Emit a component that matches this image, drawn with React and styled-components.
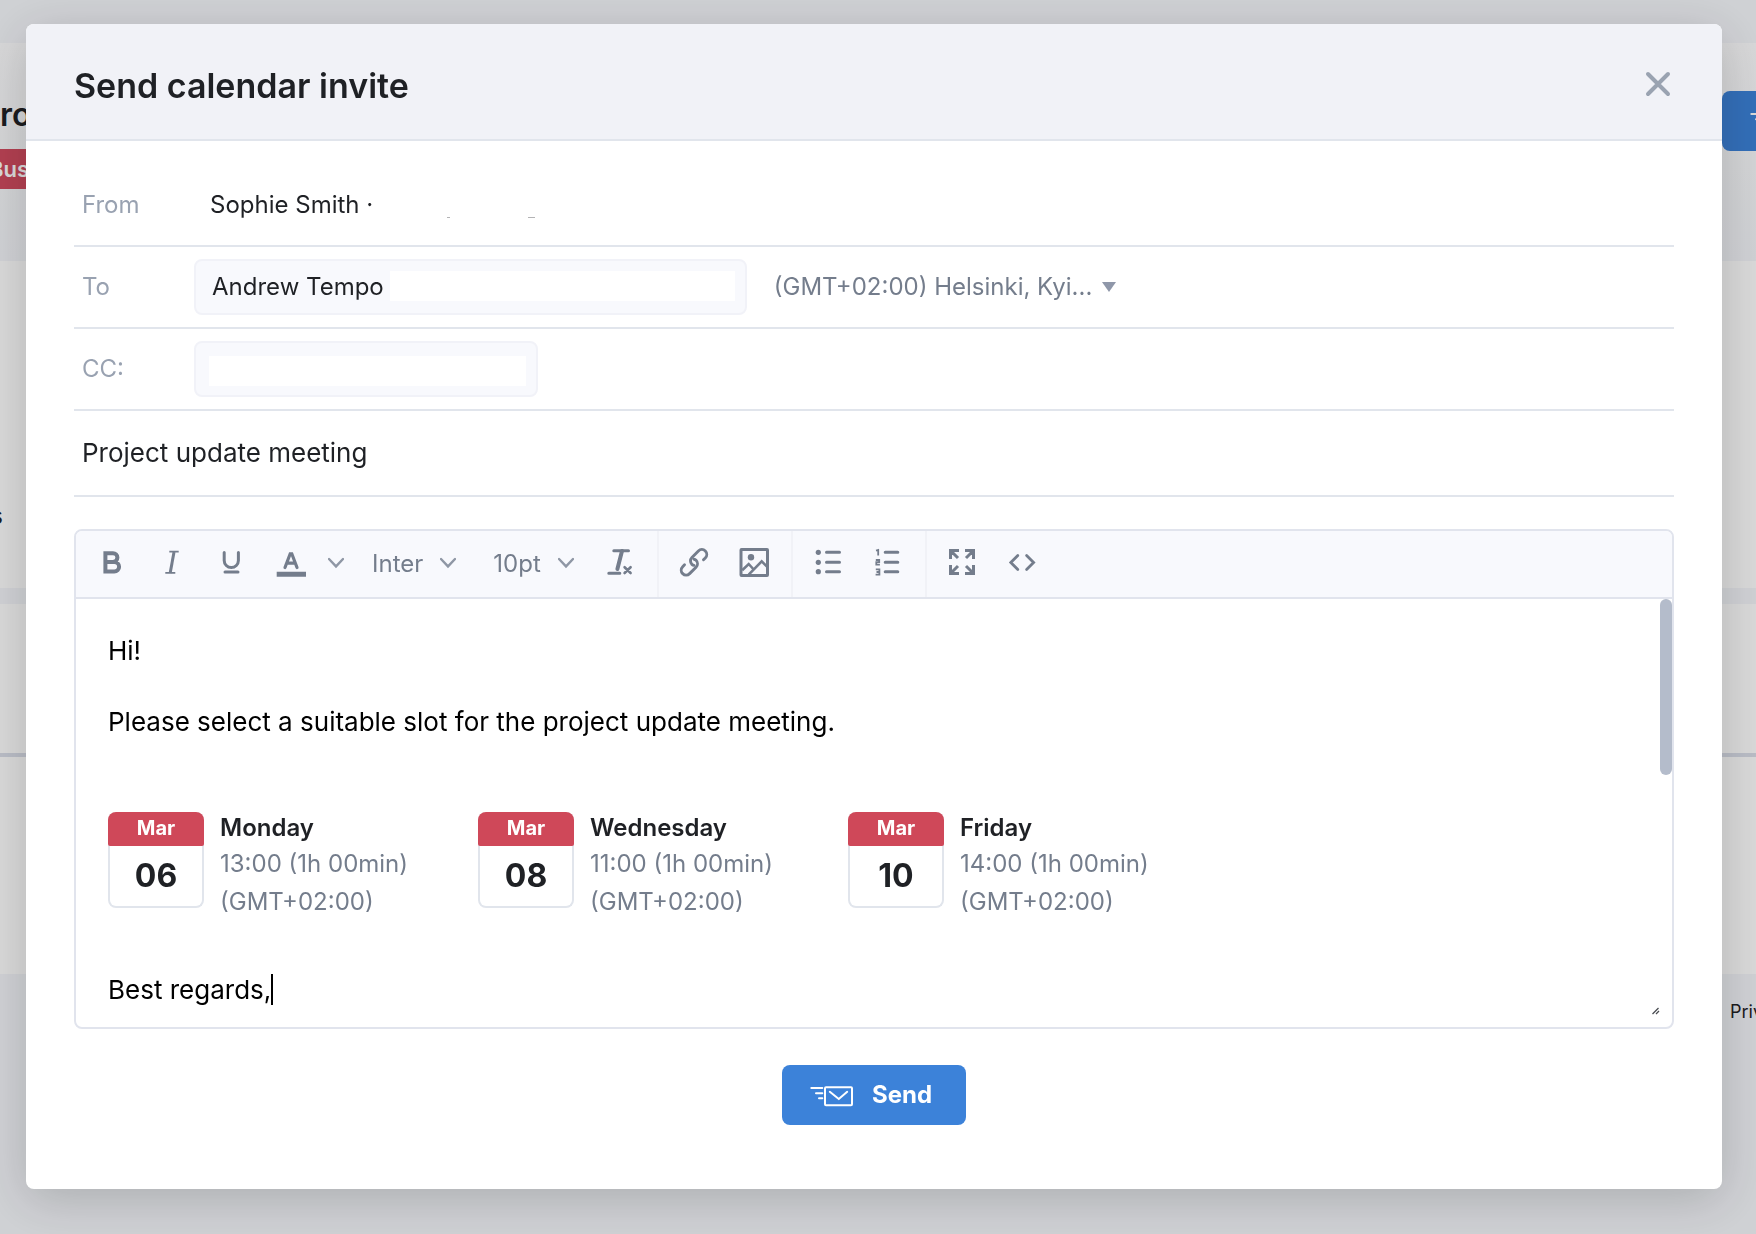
import React, { useState } from "react";
import styled, { createGlobalStyle } from "styled-components";

const GlobalStyle = createGlobalStyle`
  * {
    box-sizing: border-box;
  }
  body {
    margin: 0;
    font-family: Inter, "Liberation Sans", sans-serif;
    font-size: 24px;
    color: #1f2125;
    overflow: hidden;
  }
  button, input, select {
    font: inherit;
    color: inherit;
    border: none;
    background: transparent;
    padding: 0;
    margin: 0;
    outline: none;
  }
`;

/* page behind the dialog */

const Page = styled.div`
  min-height: 100vh;
  background-color: #f4f6fa;
  overflow: hidden;
`;

const TopBar = styled.div`
  height: 43px;
`;

const Hero = styled.div`
  display: flex;
  justify-content: space-between;
  align-items: flex-start;
  height: 218px;
  padding-top: 48px;
  background: linear-gradient(#fdfdfe, #f4f6fa);
`;

const PageTitle = styled.h1`
  margin: 0;
  font-size: 32px;
  line-height: 48px;
  font-weight: 600;
`;

const Badge = styled.div`
  display: flex;
  justify-content: flex-end;
  width: 29px;
  height: 40px;
  margin-top: 10px;
  line-height: 40px;
  font-size: 22px;
  font-weight: 600;
  color: #fff;
  background-color: #d14b5f;
`;

const Card = styled.div`
  display: flex;
  align-items: center;
  height: ${(props) => props.$height}px;
  margin-bottom: ${(props) => props.$gap || 0}px;
  background-color: #fff;
  border-bottom: ${(props) => (props.$line ? "4px solid #dadee9" : "none")};
`;

const CardText = styled.span`
  display: flex;
  justify-content: flex-end;
  width: 3px;
  padding-top: 182px;
`;

const Footer = styled.footer`
  display: flex;
  justify-content: flex-end;
  padding-top: 24px;
`;

const FooterLink = styled.a`
  width: 26px;
  font-size: 18px;
  line-height: 28px;
  color: inherit;
  text-decoration: none;
`;

/* dialog */

const Overlay = styled.div`
  position: fixed;
  inset: 0;
  padding: 24px 34px 0 26px;
  background-color: rgba(0, 0, 0, 0.15);
`;

const Modal = styled.div`
  background-color: #fff;
  border-radius: 8px;
  overflow: hidden;
  box-shadow: 0 10px 50px rgba(0, 0, 0, 0.18);
`;

const Header = styled.header`
  display: flex;
  justify-content: space-between;
  align-items: center;
  height: 117px;
  padding: 8px 48px 0;
  background-color: #f1f2f7;
  border-bottom: 2px solid #e1e5ec;
`;

const Title = styled.h2`
  margin: 0;
  font-size: 34px;
  line-height: 48px;
  font-weight: 600;
`;

const CloseButton = styled.button`
  display: flex;
  color: #9aa3b1;
`;

const Content = styled.div`
  padding: 24px 48px 64px;
`;

const Row = styled.div`
  display: flex;
  align-items: center;
  height: ${(props) => props.$height || 82}px;
  padding-left: 8px;
  border-bottom: 2px solid #e1e5ec;
`;

const Label = styled.label`
  width: 112px;
  padding-bottom: 2px;
  color: #99a2b1;
`;

const Sender = styled.div`
  display: flex;
  align-items: center;
  gap: 72px;
  padding: 0 0 2px 16px;
`;

const Chip = styled.div`
  display: flex;
  align-items: center;
  height: 56px;
  padding: ${(props) => (props.$empty ? "4px 10px 0 13px" : "0 10px 2px 16px")};
  gap: 6px;
  background-color: #f8f9fd;
  border: 2px solid #f1f2f8;
  border-radius: 8px;
`;

const ChipInput = styled.input`
  width: ${(props) => props.$width}px;
  height: 30px;
  background-color: #fff;
`;

const ZoneLabel = styled.label`
  display: flex;
  align-items: center;
  gap: 10px;
  margin-left: 27px;
  color: #747d8c;
`;

const Select = styled.select`
  appearance: none;
  field-sizing: content;
  padding-bottom: 2px;
`;

const Subject = styled.input`
  width: 100%;
  padding-bottom: 2px;
  font-size: 26px;
`;

const Editor = styled.div`
  margin-top: 32px;
  border: 2px solid #e1e4ed;
  border-radius: 8px;
  overflow: hidden;
`;

const Toolbar = styled.div`
  display: flex;
  height: 68px;
  background-color: #f8f9fd;
  border-bottom: 2px solid #e1e4ed;
  color: #747d8c;
`;

const Group = styled.div`
  display: flex;
  align-items: center;
  padding: 0 7px 0 5px;
  border-right: 2px solid #f1f2f7;

  &:last-child {
    border-right: none;
  }
`;

const ToolButton = styled.button`
  display: flex;
  align-items: center;
  justify-content: center;
  width: ${(props) => (props.$narrow ? 30 : 60)}px;
  height: 66px;
`;

const ToolSelect = styled.label`
  display: flex;
  align-items: center;
  gap: 17px;
  padding: 0 16px 0 21px;
`;

const EditorBody = styled.div`
  position: relative;
  padding: 34px 32px 19px;
  font-size: 26px;
  line-height: 36px;
  color: #000;
  outline: none;
`;

const Paragraph = styled.p`
  margin: 0 0 35px;

  &:last-of-type {
    margin: 0;
  }
`;

const Caret = styled.span`
  display: inline-block;
  width: 2px;
  height: 31px;
  margin-top: -8px;
  vertical-align: -6px;
  background-color: #000;
`;

const ScrollThumb = styled.div`
  position: absolute;
  top: 0;
  right: 0;
  width: 12px;
  height: 176px;
  border-radius: 6px;
  background-color: #b4bccb;
`;

const ResizeHandle = styled.svg`
  position: absolute;
  right: 12px;
  bottom: 12px;
`;

const Slots = styled.div`
  display: flex;
  margin: 72px 0 51px;
`;

const Slot = styled.div`
  display: flex;
  gap: 16px;
  width: 370px;
`;

const DateBox = styled.div`
  width: 96px;
  height: 96px;
  border: 2px solid #e1e5ec;
  border-top: none;
  border-radius: 8px;
  text-align: center;
`;

const Month = styled.div`
  height: 34px;
  margin: 0 -2px;
  border-radius: 8px 8px 2px 2px;
  background-color: #cf4859;
  color: #fff;
  font-size: 20px;
  line-height: 32px;
  font-weight: 700;
`;

const DayNumber = styled.div`
  font-size: 32px;
  line-height: 60px;
  font-weight: 700;
  color: #1f2125;
`;

const SlotText = styled.div`
  font-size: 24px;
  line-height: 38px;
  color: #747d8c;
`;

const DayName = styled.div`
  margin-bottom: 1px;
  line-height: 32px;
  font-weight: 600;
  color: #1f2125;
`;

const Actions = styled.div`
  display: flex;
  justify-content: center;
  margin-top: 36px;
`;

const SendButton = styled.button`
  display: flex;
  align-items: center;
  gap: 18px;
  flex-shrink: 0;
  height: 60px;
  padding: 0 34px 0 28px;
  border-radius: 8px;
  background-color: #3c82d9;
  color: #fff;
  font-weight: 700;
`;

const SendText = styled.span`
  padding-bottom: 2px;
`;

/* runs off the right side of the page */
const PageSendButton = styled(SendButton)`
  && {
    margin-right: -72px;
  }
`;

/* icons */

const Icon = ({ children, width = 3 }) => (
  <svg
    width="36"
    height="36"
    viewBox="0 0 36 36"
    fill="none"
    stroke="currentColor"
    strokeWidth={width}
    strokeLinecap="round"
    aria-hidden="true"
  >
    {children}
  </svg>
);

const BoldIcon = () => (
  <Icon width={4}>
    <path d="M12.4 7.2H20a4.4 4.4 0 0 1 0 8.8h-7.6zM12.4 16h8.9a4.8 4.8 0 0 1 0 9.6h-8.9z" />
  </Icon>
);

const ItalicIcon = () => (
  <Icon>
    <path d="M21 6l-3.8 21" strokeLinecap="butt" />
    <path d="M16.3 5.6h9.4M12.3 26.8h10" strokeWidth="1.8" strokeLinecap="butt" />
  </Icon>
);

const UnderlineIcon = () => (
  <Icon>
    <path d="M11.2 6.5v8a7.1 7.1 0 0 0 14.2 0v-8M12 26h13" />
  </Icon>
);

const ColorIcon = () => (
  <Icon width={3.2}>
    <path d="M12 21.5L17.2 7.8h1.6L24 21.5M14 17.2h8" />
    <path d="M3.7 28.3h29.3" strokeWidth="5" strokeLinecap="butt" />
  </Icon>
);

const ClearIcon = () => (
  <Icon>
    <path d="M11.8 4.8h14.7M6.8 27.3h11" />
    <path d="M20 5l-4.6 18" strokeWidth="4" />
    <path d="M22.6 21.2l6 5.8M28.6 21.2l-6 5.8" strokeWidth="2.6" />
  </Icon>
);

const LinkIcon = () => (
  <Icon width={2.9}>
    <g transform="translate(18 16.3) rotate(-45)">
      <path d="M8.5 4.9h2.6a4.9 4.9 0 0 0 0-9.8H2a4.9 4.9 0 0 0-4.9 4.9q0 1.2.8 2.2" />
      <path d="M-8.5-4.9h-2.6a4.9 4.9 0 0 0 0 9.8H-2a4.9 4.9 0 0 0 4.9-4.9q0-1.2-.8-2.2" />
    </g>
  </Icon>
);

const ImageIcon = () => (
  <Icon>
    <rect x="5" y="3.5" width="26.5" height="26" rx="0.5" />
    <circle cx="15" cy="11.3" r="3.2" fill="currentColor" stroke="none" />
    <path
      d="M6.2 24.2l6.5-6.2 5 5.5M12.7 28.7l13-13.4 5.3 5.4"
      strokeWidth="2.6"
      strokeLinecap="butt"
    />
  </Icon>
);

const BulletIcon = () => (
  <Icon>
    <path d="M16.5 6.3h13M16.5 16.3h13M16.5 25.7h13" />
    <g fill="currentColor" stroke="none">
      <circle cx="8.3" cy="6.3" r="2.6" />
      <circle cx="8.3" cy="16.3" r="2.6" />
      <circle cx="8.3" cy="25.7" r="2.6" />
    </g>
  </Icon>
);

const NumberedIcon = () => (
  <Icon>
    <path d="M15.2 6.3h12.6M15.2 16.3h12.6M15.2 25.7h12.6" />
    <path
      d="M6 4.6L8.2 4v5.4M5.8 14h3.4v2.2H6.3v2.5h3.6M5.8 23.4h3.6v5.2H5.6M6.5 26h2.9"
      strokeWidth="1.8"
      strokeLinecap="butt"
    />
  </Icon>
);

const ExpandIcon = () => (
  <Icon>
    <path
      d="M6.5 13V4.5H15M21 4.5h8.5V13M29.5 19v8.5H21M15 27.5H6.5V19M7 5l7 7M29 5l-7 7M29 27l-7-7M7 27l7-7"
      strokeLinecap="butt"
    />
  </Icon>
);

const CodeIcon = () => (
  <Icon width={2.8}>
    <path d="M13.8 9.5l-7 7 7 7M22.6 9.5l7 7-7 7" />
  </Icon>
);

const Chevron = () => (
  <svg width="16" height="36" viewBox="0 0 16 36" fill="none" aria-hidden="true">
    <path d="M1 13l7 7.4 7-7.4" stroke="#8f97a5" strokeWidth="2.4" strokeLinecap="round" />
  </svg>
);

const MailIcon = () => (
  <svg
    width="44"
    height="24"
    viewBox="0 0 44 24"
    fill="none"
    stroke="currentColor"
    strokeWidth="2"
    strokeLinecap="round"
    aria-hidden="true"
  >
    <path d="M1.3 5h11M6 10.3h6.3M9 15.3h3.3" />
    <rect x="15" y="4.2" width="27" height="18" rx="1" />
    <path d="M19.8 8.8l9 7.2 8.4-7.2" />
  </svg>
);

const slots = [
  { month: "Mar", number: "06", day: "Monday", time: "13:00 (1h 00min)" },
  { month: "Mar", number: "08", day: "Wednesday", time: "11:00 (1h 00min)" },
  { month: "Mar", number: "10", day: "Friday", time: "14:00 (1h 00min)" },
];

const App = () => {
  const [subject, setSubject] = useState("Project update meeting");

  return (
    <>
      <GlobalStyle />
      <Page>
        <TopBar />
        <Hero>
          <div>
            <PageTitle>ro</PageTitle>
            <Badge>Bus</Badge>
          </div>
          <PageSendButton aria-label="Send invite">
            <MailIcon />
          </PageSendButton>
        </Hero>
        <Card $height={327} $gap={16}>
          <CardText>s</CardText>
        </Card>
        <Card $height={153} $line />
        <Card $height={217} />
        <Footer>
          <FooterLink href="#privacy">Priv</FooterLink>
        </Footer>
      </Page>

      <Overlay>
        <Modal role="dialog" aria-labelledby="title">
          <Header>
            <Title id="title">Send calendar invite</Title>
            <CloseButton aria-label="Close">
              <svg width="32" height="32" viewBox="0 0 32 32" fill="none">
                <path
                  d="M6 4l20 20M26 4L6 24"
                  stroke="currentColor"
                  strokeWidth="4"
                  strokeLinecap="round"
                />
              </svg>
            </CloseButton>
          </Header>
          <Content>
            <Row>
              <Label as="span">From</Label>
              <Sender>
                Sophie Smith ·
                <svg width="92" height="30" viewBox="0 0 92 30" fill="#b3b3b5">
                  <rect x="2" y="28" width="3" height="1" />
                  <rect x="83" y="28" width="7" height="1" />
                </svg>
              </Sender>
            </Row>
            <Row>
              <Label htmlFor="to">To</Label>
              <Chip>
                Andrew Tempo
                <ChipInput id="to" $width={345} />
              </Chip>
              <ZoneLabel>
                <Select aria-label="Time zone">
                  <option>(GMT+02:00) Helsinki, Kyi...</option>
                </Select>
                <svg width="14" height="10" viewBox="0 0 14 10" fill="#8f97a9">
                  <path d="M0 0h14L7 10z" />
                </svg>
              </ZoneLabel>
            </Row>
            <Row>
              <Label htmlFor="cc">CC:</Label>
              <Chip $empty>
                <ChipInput id="cc" $width={317} />
              </Chip>
            </Row>
            <Row $height={86}>
              <Subject
                aria-label="Subject"
                value={subject}
                onChange={(e) => setSubject(e.target.value)}
              />
            </Row>

            <Editor>
              <Toolbar>
                <Group>
                  <ToolButton aria-label="Bold">
                    <BoldIcon />
                  </ToolButton>
                  <ToolButton aria-label="Italic">
                    <ItalicIcon />
                  </ToolButton>
                  <ToolButton aria-label="Underline">
                    <UnderlineIcon />
                  </ToolButton>
                  <ToolButton aria-label="Text color">
                    <ColorIcon />
                  </ToolButton>
                  <ToolButton $narrow aria-label="More colors">
                    <Chevron />
                  </ToolButton>
                  <ToolSelect>
                    <Select aria-label="Font">
                      <option>Inter</option>
                    </Select>
                    <Chevron />
                  </ToolSelect>
                  <ToolSelect>
                    <Select aria-label="Font size">
                      <option>10pt</option>
                    </Select>
                    <Chevron />
                  </ToolSelect>
                  <ToolButton aria-label="Clear formatting">
                    <ClearIcon />
                  </ToolButton>
                </Group>
                <Group>
                  <ToolButton aria-label="Link">
                    <LinkIcon />
                  </ToolButton>
                  <ToolButton aria-label="Image">
                    <ImageIcon />
                  </ToolButton>
                </Group>
                <Group>
                  <ToolButton aria-label="Bulleted list">
                    <BulletIcon />
                  </ToolButton>
                  <ToolButton aria-label="Numbered list">
                    <NumberedIcon />
                  </ToolButton>
                </Group>
                <Group>
                  <ToolButton aria-label="Full screen">
                    <ExpandIcon />
                  </ToolButton>
                  <ToolButton aria-label="Source code">
                    <CodeIcon />
                  </ToolButton>
                </Group>
              </Toolbar>
              <EditorBody>
                <Paragraph>Hi!</Paragraph>
                <Paragraph>
                  Please select a suitable slot for the project update meeting.
                </Paragraph>
                <Slots>
                  {slots.map((slot) => (
                    <Slot key={slot.number}>
                      <DateBox>
                        <Month>{slot.month}</Month>
                        <DayNumber>{slot.number}</DayNumber>
                      </DateBox>
                      <SlotText>
                        <DayName>{slot.day}</DayName>
                        <div>{slot.time}</div>
                        <div>(GMT+02:00)</div>
                      </SlotText>
                    </Slot>
                  ))}
                </Slots>
                <Paragraph>
                  Best regards,
                  <Caret />
                </Paragraph>
                <ScrollThumb />
                <ResizeHandle width="8" height="8" viewBox="0 0 8 8" stroke="#4a4d52">
                  <path d="M0.5 7L6.5 1M4 7l3-3" strokeWidth="1.3" />
                </ResizeHandle>
              </EditorBody>
            </Editor>

            <Actions>
              <SendButton>
                <MailIcon />
                <SendText>Send</SendText>
              </SendButton>
            </Actions>
          </Content>
        </Modal>
      </Overlay>
    </>
  );
};

export default App;
